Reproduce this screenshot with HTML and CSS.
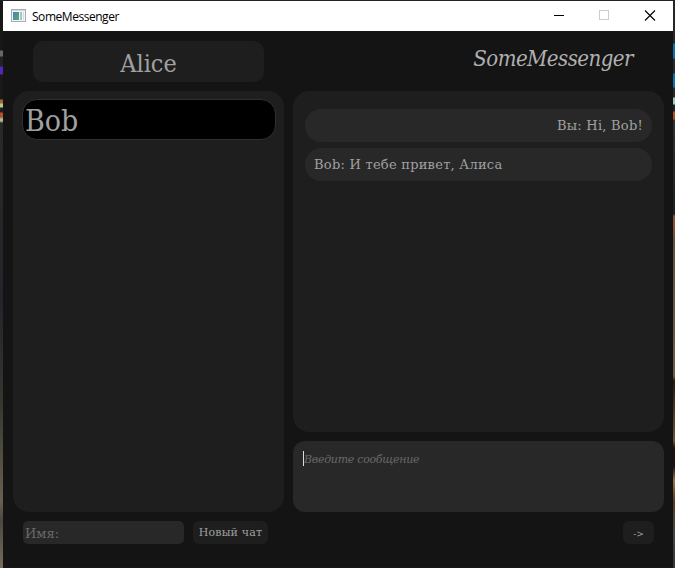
FILE: index.html
```
<!DOCTYPE html>
<html lang="ru">
<head>
<meta charset="utf-8">
<title>SomeMessenger</title>
<link rel="stylesheet" href="styles.css">
</head>
<body>
<div class="desktop">
  <div class="edge edge-left"></div>
  <main class="window">
    <header class="titlebar">
      <svg class="app-icon" width="16" height="14" viewBox="0 0 16 14">
        <defs><linearGradient id="pane" x1="0" y1="0" x2="1" y2="1"><stop offset="0" stop-color="#4685b4"/><stop offset="1" stop-color="#55a778"/></linearGradient></defs>
        <rect x=".5" y=".5" width="14" height="12" fill="#f4f4f4" stroke="#a7adb2"/>
        <path d="M1 1.5h13" stroke="#d4dade"/>
        <rect x="2" y="3" width="6" height="8" fill="url(#pane)"/>
        <rect x="9" y="3" width="2" height="8" fill="#a5c5c8"/>
        <rect x="12" y="3" width="1" height="8" fill="#d5dcdf"/>
      </svg>
      <span class="caption">SomeMessenger</span>
      <svg class="controls" width="138" height="30" viewBox="0 0 138 30" fill="none">
        <path d="M19 14.5h10" stroke="#000"/>
        <rect x="64.500" y="9.500" width="9" height="9" stroke="#ccc"/>
        <path d="M110 9.500l10 10M120 9.500l-10 10" stroke="#000" stroke-width="1.100"/>
      </svg>
    </header>
    <div class="content">
      <section class="column">
        <div class="head"><div class="profile"><span>Alice</span></div></div>
        <div class="contacts"><div class="contact"><span>Bob</span></div></div>
        <div class="actions">
          <div class="name-input"><span>Имя:</span></div>
          <button class="new-chat"><span>Новый чат</span></button>
        </div>
      </section>
      <section class="column">
        <div class="head brand"><span>SomeMessenger</span></div>
        <div class="messages">
          <div class="message own"><span>Вы: Hi, Bob!</span></div>
          <div class="message"><span>Bob: И тебе привет, Алиса</span></div>
        </div>
        <div class="composer"><i class="caret"></i><span>Введите сообщение</span></div>
        <div class="actions send-row"><button class="send"><span>-&gt;</span></button></div>
      </section>
    </div>
  </main>
  <div class="edge edge-right"></div>
</div>
</body>
</html>
```
FILE: styles.css
```
* { box-sizing: border-box; }
body { margin: 0; background: #202020; }
.desktop {
  display: grid;
  grid-template-columns: 3px 670px 2px;
  height: 568px;
  padding-top: 1px;
  overflow: hidden;
  background: #242124;
  font-family: "DejaVu Serif Condensed", "DejaVu Serif", serif;
  font-stretch: condensed;
  color: #a0a0a0;
}
.edge-left { background: linear-gradient(#171717 0 49px, #66666b 50px 55px, #222 56px 65px, #5127b4 66px 73px, #191919 74px 98px, #a86435 99px 102px, #b6c994 103px 106px, #202020 107px 111px, #b6502b 112px 116px, #a8bd91 118px 120px, #292929 122px, #24242b 300px, #34362f 400px, #69604d 500px, #4b4840 520px, #756d5c 567px); }
.edge-right { background: linear-gradient(#25262a 0 42px, #0874ad 43px 57px, #29292d 58px 72px, #0874ad 73px 86px, #29292d 87px 96px, #9bcdb5 97px 103px, #222 104px 110px, #b34b1d 111px 118px, #303033 119px, #192023 213px, #8c5035 215px 225px, #5d5140 240px, #6c5b45 375px, #251a12 380px, #715033 440px, #1c110b 447px 465px, #9a7445 480px, #5c3820 500px, #414842 530px, #343832 567px); }
.window { display: flex; flex-direction: column; background: #141414; border-bottom: 1px solid #1d1418; }
.titlebar { display: flex; align-items: center; height: 30px; padding-left: 8px; background: #fff; color: #000; }
.app-icon { margin: 0 5px 1px 0; }
.caption { flex: 1; font: 12px "Open Sans", sans-serif; letter-spacing: -.46px; }
.content { display: grid; grid-template-columns: 271px 371px; gap: 9px; padding: 10px 9px 0 10px; }
.column { display: flex; flex-direction: column; }
.column span { display: block; white-space: nowrap; }
.head { height: 41px; margin-bottom: 9px; padding: 0 20px; }
.profile { display: flex; justify-content: center; align-items: center; height: 41px; padding-top: 3px; border-radius: 10px; background: #1e1e1e; font-size: 25px; }
.brand { display: flex; justify-content: flex-end; padding: 0 31px 6px 0; align-items: center; font-size: 22px; font-style: italic; letter-spacing: -.52px; color: #b0b0b0; }
.contacts { height: 421px; padding: 8px 8px 0 9px; border-radius: 16px; background: #1e1e1e; }
.contact { display: flex; align-items: center; height: 41px; padding: 2px 0 0 2px; border: 1px solid #303030; border-radius: 15px; background: #000; font-size: 30px; }
.messages { height: 341px; padding: 18px 12px; border-radius: 16px; background: #1e1e1e; }
.message { display: flex; align-items: center; height: 33px; margin-bottom: 6px; padding: 0 9px; border-radius: 16px; background: #282828; font-family: "DejaVu Serif", serif; font-stretch: normal; font-size: 13px; letter-spacing: .25px; }
.own { justify-content: flex-end; }
.composer { display: flex; align-items: flex-start; height: 71px; margin-top: 9px; padding: 10px; border-radius: 12px; background: #282828; font-family: "DejaVu Serif", serif; font-stretch: normal; font-size: 11px; line-height: 17px; font-style: italic; letter-spacing: -.28px; color: #686868; }
.caret { width: 1px; height: 15px; background: #ddd; }
.actions { display: flex; gap: 9px; margin-top: 9px; padding-left: 10px; }
.name-input { display: flex; align-items: center; width: 161px; height: 23px; padding: 1px 2px 0; border-radius: 5px; background: #282828; color: #686868; font-family: "DejaVu Serif", serif; font-stretch: normal; font-size: 13px; }
button { display: flex; align-items: center; justify-content: center; height: 23px; padding: 0; border: 0; border-radius: 6px; background: #1e1e1e; color: #a0a0a0; font: inherit; }
.new-chat { width: 75px; font-family: "DejaVu Serif", serif; font-stretch: normal; font-size: 11px; letter-spacing: .15px; }
.send-row { justify-content: flex-end; padding-right: 10px; }
.send { width: 31px; padding-top: 1px; font-size: 10px; }
```
